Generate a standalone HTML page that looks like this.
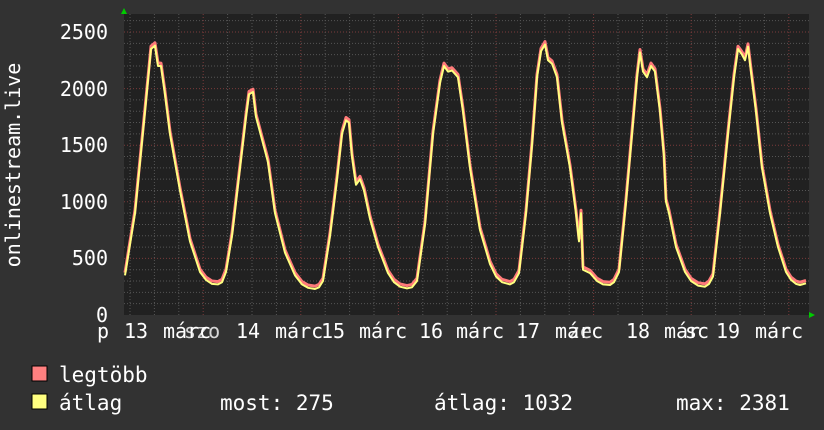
<!DOCTYPE html>
<html><head><meta charset="utf-8"><style>
html,body{margin:0;padding:0;background:#333;}
body{width:824px;height:430px;overflow:hidden;position:relative;font-family:"DejaVu Sans Mono","Liberation Mono",monospace;color:#fff;}
</style></head><body>
<svg id="g" width="824" height="430" xmlns="http://www.w3.org/2000/svg" style="position:absolute;left:0;top:0">
<rect x="0" y="0" width="824" height="430" fill="#323232"/>
<rect x="124" y="14" width="685" height="301" fill="#212121"/>
<g id="grid"></g>
<path id="mx" fill="none" stroke="#ff7a7a" stroke-width="3" stroke-linejoin="round"/>
<path id="av" fill="none" stroke="#ffff80" stroke-width="2" stroke-linejoin="round"/>
<polygon points="121,14 127,14 124,8" fill="#00cc00"/>
<polygon points="809,312 809,318 815,315" fill="#00cc00"/>
<g font-family="DejaVu Sans Mono, Liberation Mono, monospace" font-size="20" fill="#fff" text-anchor="end">
<text x="108" y="39">2500</text>
<text x="108" y="96">2000</text>
<text x="108" y="152">1500</text>
<text x="108" y="209">1000</text>
<text x="108" y="265">500</text>
<text x="108" y="322">0</text>
</g>
<text transform="translate(20,165) rotate(-90)" text-anchor="middle" font-family="DejaVu Sans Mono, monospace" font-size="20" fill="#fff">onlinestream.live</text>
<g font-family="DejaVu Sans Mono, monospace" font-size="20" fill="#fff">
<text x="97" y="338">p</text>
<text x="124" y="338">13</text><text x="163" y="338">márc</text><text x="184" y="338" opacity="0.8">szo</text>
<text x="236" y="338">14</text><text x="275" y="338">márc</text>
<text x="321" y="338">15</text><text x="359" y="338">márc</text>
<text x="419" y="338">16</text><text x="456" y="338">márc</text>
<text x="516" y="338">17</text><text x="555" y="338">márc</text><text x="568" y="338" opacity="0.8">ze</text>
<text x="626" y="338">18</text><text x="664" y="338">már</text><text x="685" y="338">sc</text>
<text x="716" y="338">19</text><text x="755" y="338">márc</text>
</g>
<rect x="32" y="366" width="15" height="15" fill="#ff8080" stroke="#000" stroke-width="1"/>
<rect x="32" y="394" width="15" height="15" fill="#ffff80" stroke="#000" stroke-width="1"/>
<g font-family="DejaVu Sans Mono, monospace" font-size="21" fill="#fff">
<text x="59" y="382">legtöbb</text>
<text x="59" y="410">átlag</text>
<text x="220" y="410">most: 275</text>
<text x="434" y="410">átlag: 1032</text>
<text x="676" y="410">max: 2381</text>
</g>
</svg>
<script>
var g=document.getElementById('grid'),s='';
for(var v=100;v<=2600;v+=100){var y=315-v*0.1132;if(y<14)break;var maj=v%500==0;
s+='<line x1="124" x2="809" y1="'+y+'" y2="'+y+'" stroke="'+(maj?'#7a3a3a':'#555')+'" stroke-dasharray="1,2"/>';}
for(var x=130;x<809;x+=24.4){var d=Math.abs(((x-204)/97.7)-Math.round((x-204)/97.7))<0.05;
s+='<line y1="14" y2="315" x1="'+x+'" x2="'+x+'" stroke="'+(d?'#7a3a3a':'#555')+'" stroke-dasharray="1,2"/>';}
g.innerHTML=s;
var k=[125,350,135,900,145,1800,151,2350,155,2380,158,2200,161,2200,165,1950,170,1600,180,1100,190,650,200,380,206,310,212,275,218,270,222,290,226,380,232,700,240,1300,246,1750,249,1950,253,1970,256,1750,262,1550,268,1350,275,900,285,550,295,350,302,270,308,240,315,230,319,245,323,300,330,700,337,1200,342,1600,346,1720,349,1700,352,1400,356,1150,360,1200,364,1100,370,850,378,600,388,370,394,290,400,250,407,235,412,245,417,300,425,800,433,1600,440,2050,444,2200,448,2150,452,2160,458,2100,463,1800,470,1300,480,750,490,450,496,340,502,290,510,270,514,290,519,370,526,900,532,1500,537,2100,541,2330,545,2390,548,2250,552,2220,557,2100,562,1700,570,1300,576,900,579,650,581,900,583,400,590,370,597,300,603,270,610,265,614,290,619,380,626,1000,632,1600,637,2100,640,2320,643,2150,647,2100,651,2200,655,2150,660,1800,664,1400,666,1000,669,900,676,600,685,380,691,300,698,260,705,250,709,275,713,340,720,900,728,1600,734,2100,738,2350,742,2300,745,2250,748,2370,751,2150,756,1800,762,1300,770,900,778,600,786,380,791,310,796,275,800,265,806,280];
function p(off){var d='';for(var i=0;i<k.length;i+=2){d+=(i?'L':'M')+k[i]+','+(315-(k[i+1]+off)*0.1132).toFixed(1);}return d;}
document.getElementById('mx').setAttribute('d',p(25));
document.getElementById('av').setAttribute('d',p(0));
</script>
</body></html>
